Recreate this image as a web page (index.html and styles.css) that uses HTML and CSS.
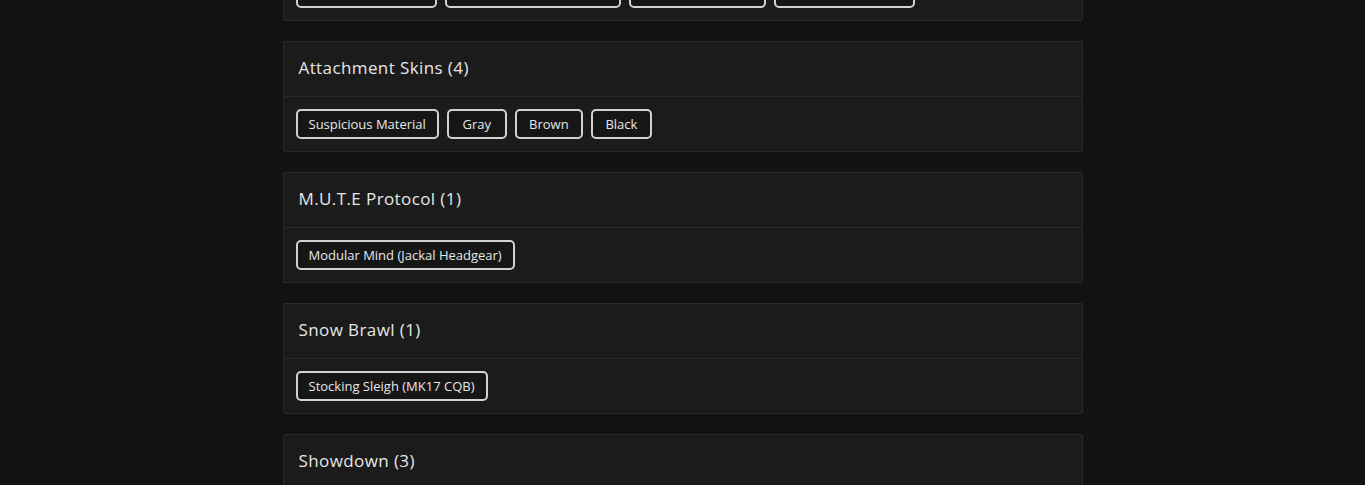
FILE: index.html
```html
<!DOCTYPE html>
<html lang="en">
<head>
<meta charset="utf-8">
<title>Skins</title>
<link rel="stylesheet" href="styles.css">
</head>
<body>
<main class="list">
  <section class="card">
    <header class="card-head"><h2 class="card-title">Weapon Skins (4)</h2></header>
    <div class="card-body">
      <span class="tag tag-w141">Urban Camo</span>
      <span class="tag tag-w176">Desert Hunter</span>
      <span class="tag tag-w137">Arctic Frost</span>
      <span class="tag tag-w141">Black Ice</span>
    </div>
  </section>
  <section class="card">
    <header class="card-head"><h2 class="card-title">Attachment Skins (4)</h2></header>
    <div class="card-body">
      <span class="tag">Suspicious Material</span>
      <span class="tag tag-w60">Gray</span>
      <span class="tag tag-w68">Brown</span>
      <span class="tag tag-w61">Black</span>
    </div>
  </section>
  <section class="card">
    <header class="card-head"><h2 class="card-title">M.U.T.E Protocol (1)</h2></header>
    <div class="card-body">
      <span class="tag">Modular Mind (Jackal Headgear)</span>
    </div>
  </section>
  <section class="card">
    <header class="card-head"><h2 class="card-title">Snow Brawl (1)</h2></header>
    <div class="card-body">
      <span class="tag">Stocking Sleigh (MK17 CQB)</span>
    </div>
  </section>
  <section class="card">
    <header class="card-head"><h2 class="card-title">Showdown (3)</h2></header>
    <div class="card-body">
      <span class="tag">Sidewinder</span>
      <span class="tag">Outlaw</span>
      <span class="tag">Sheriff</span>
    </div>
  </section>
</main>
</body>
</html>
```

FILE: styles.css
```css
html, body {
  margin: 0;
  padding: 0;
  background: #121212;
  height: 100%;
  overflow: hidden;
}
body {
  font-family: "Open Sans", "Noto Sans", sans-serif;
  color: #e4e4e4;
}
.list {
  width: 800px;
  margin: -90px auto 0;
  display: flex;
  flex-direction: column;
  gap: 20px;
}
.card {
  background: #1b1b1b;
  border: 1px solid #2a2a2a;
  border-radius: 2px;
}
.card-head {
  height: 55px;
  box-sizing: border-box;
  display: flex;
  align-items: center;
  padding: 0 15px 3px;
  border-bottom: 1px solid #2a2a2a;
}
.card-title {
  margin: 0;
  font-size: 17px;
  font-weight: 500;
  letter-spacing: 0.4px;
  color: #e6e6e6;
}
.card-body {
  display: flex;
  flex-wrap: wrap;
  gap: 8px;
  padding: 12px;
}
.tag {
  display: inline-flex;
  align-items: center;
  justify-content: center;
  height: 30px;
  box-sizing: border-box;
  padding: 0 11px;
  border: 2px solid #d2d2d2;
  border-radius: 5px;
  background: #161616;
  font-size: 13px;
  color: #e6e8ea;
  white-space: nowrap;
}
.tag-w141 { width: 141px; }
.tag-w176 { width: 176px; }
.tag-w137 { width: 137px; }
.tag-w60 { width: 60px; }
.tag-w68 { width: 68px; }
.tag-w61 { width: 61px; }
```
